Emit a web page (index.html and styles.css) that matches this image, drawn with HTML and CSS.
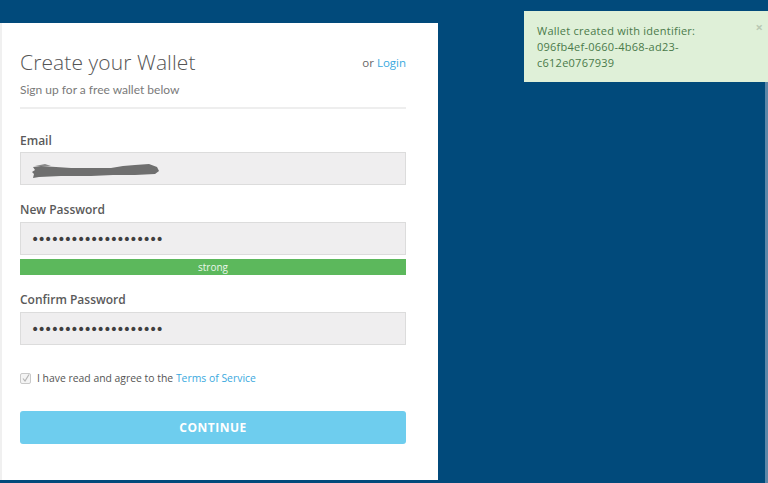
FILE: index.html
```html
<!DOCTYPE html>
<html>
<head>
<meta charset="utf-8">
<link rel="stylesheet" href="styles.css">
</head>
<body>
<div class="page">
  <div class="card">
    <div class="head">
      <h1 class="title">Create your Wallet</h1>
      <div class="login">or <a class="link">Login</a></div>
    </div>
    <p class="sub">Sign up for a free wallet below</p>
    <div class="rule"></div>

    <label class="lbl lbl-email">Email</label>
    <div class="input">
      <svg class="redact" width="130" height="20" viewBox="0 0 130 20">
        <path d="M2 7 L10 6 L40 8 L80 8 L92 6 L104 5 L118 4 L126 7 L128 11 L124 14 L104 15 L82 15 L60 16 L30 16 L8 17 L2 18 L3 14 L1 12 L4 10 Z" fill="#6f6f6f"/>
        <path d="M4 6 L14 4 L20 6 Z" fill="#8a8a8a"/>
      </svg>
    </div>

    <label class="lbl">New Password</label>
    <div class="input"><span class="dots">••••••••••••••••••••</span></div>
    <div class="strength">strong</div>

    <label class="lbl">Confirm Password</label>
    <div class="input"><span class="dots">••••••••••••••••••••</span></div>

    <div class="agree">
      <span class="check">
        <svg width="8" height="8" viewBox="0 0 8 8"><path d="M1 4.5 L3 7 L7 0.5" fill="none" stroke="#b5b5b5" stroke-width="1.2"/></svg>
      </span>
      <span>I have read and agree to the <a class="link">Terms of Service</a></span>
    </div>

    <button class="btn">CONTINUE</button>
  </div>
</div>

<div class="toast">
  <span class="close">×</span>
  <div class="toast-text">Wallet created with identifier:<br>096fb4ef-0660-4b68-ad23-<br>c612e0767939</div>
</div>
<div class="edge"></div>
</body>
</html>
```

FILE: styles.css
```css
html, body {
  margin: 0;
  padding: 0;
  height: 100%;
}
body {
  background: #014a7b;
  font-family: "Open Sans", "Liberation Sans", sans-serif;
  overflow: hidden;
}
.page {
  padding-top: 23px;
}
.card {
  box-sizing: border-box;
  width: 438px;
  height: 457px;
  background: #ffffff;
  padding: 26px 32px 0 18px;
  display: flex;
  flex-direction: column;
  border-left: 2px solid #f0f0f0;
}
.head {
  display: flex;
  justify-content: space-between;
  align-items: center;
}
.title {
  margin: 0;
  font-weight: 300;
  font-size: 21px;
  color: #555555;
  letter-spacing: 0.1px;
  line-height: 26px;
}
.login {
  font-size: 11.5px;
  color: #666;
}
.link {
  color: #3aa9de;
  text-decoration: none;
}
.sub {
  margin: 7px 0 0 0;
  font-family: "Lato", "Liberation Sans", sans-serif;
  font-size: 12px;
  color: #7a7a7a;
  line-height: 16px;
}
.rule {
  height: 2px;
  background: #eeeeee;
  margin-top: 9px;
}
.lbl {
  display: block;
  font-size: 12px;
  font-weight: 600;
  color: #5a5a5a;
  line-height: 16px;
  margin-top: 17px;
  margin-bottom: 4px;
}
.lbl-email {
  margin-top: 24px;
  margin-bottom: 3px;
}
.input {
  box-sizing: border-box;
  height: 33px;
  background: #efeeef;
  border: 1px solid #dcdcdc;
  display: flex;
  align-items: center;
  padding-left: 10px;
}
.redact {
  display: block;
  margin-top: 2px;
}
.dots {
  font-family: "DejaVu Sans", sans-serif;
  font-size: 14px;
  letter-spacing: -1.7px;
  color: #3f3f3f;
  margin-top: 1px;
}
.strength {
  margin-top: 4px;
  height: 16px;
  background: #5cb85c;
  color: #eaf6ea;
  font-size: 10px;
  line-height: 16px;
  text-align: center;
}
.agree {
  display: flex;
  align-items: center;
  gap: 6px;
  margin-top: 26px;
  font-size: 10.4px;
  color: #555;
  line-height: 14px;
}
.check {
  box-sizing: border-box;
  width: 11px;
  height: 11px;
  border: 1px solid #c9c9c9;
  border-radius: 2px;
  background: #f4f4f4;
  display: flex;
  align-items: center;
  justify-content: center;
}
.check svg {
  display: block;
}
.btn {
  margin-top: 26px;
  height: 33px;
  border: none;
  border-radius: 3px;
  background: #6ecdee;
  color: #ffffff;
  font-family: "Open Sans", "Liberation Sans", sans-serif;
  font-weight: 700;
  font-size: 12px;
  letter-spacing: 0.5px;
  padding: 0;
}
.toast {
  position: absolute;
  top: 11px;
  left: 524px;
  width: 244px;
  height: 71px;
  box-sizing: border-box;
  background: #dff0d8;
  padding: 12px 0 0 13px;
  color: #4a7a4a;
}
.toast-text {
  font-size: 11px;
  letter-spacing: 0.25px;
  line-height: 16px;
}
.close {
  position: absolute;
  top: 7px;
  right: 5px;
  font-size: 13px;
  color: #b9c9b4;
  font-weight: 700;
}
.edge {
  position: absolute;
  top: 82px;
  right: 0;
  width: 3px;
  height: 401px;
  background: #5c87a8;
}
```
